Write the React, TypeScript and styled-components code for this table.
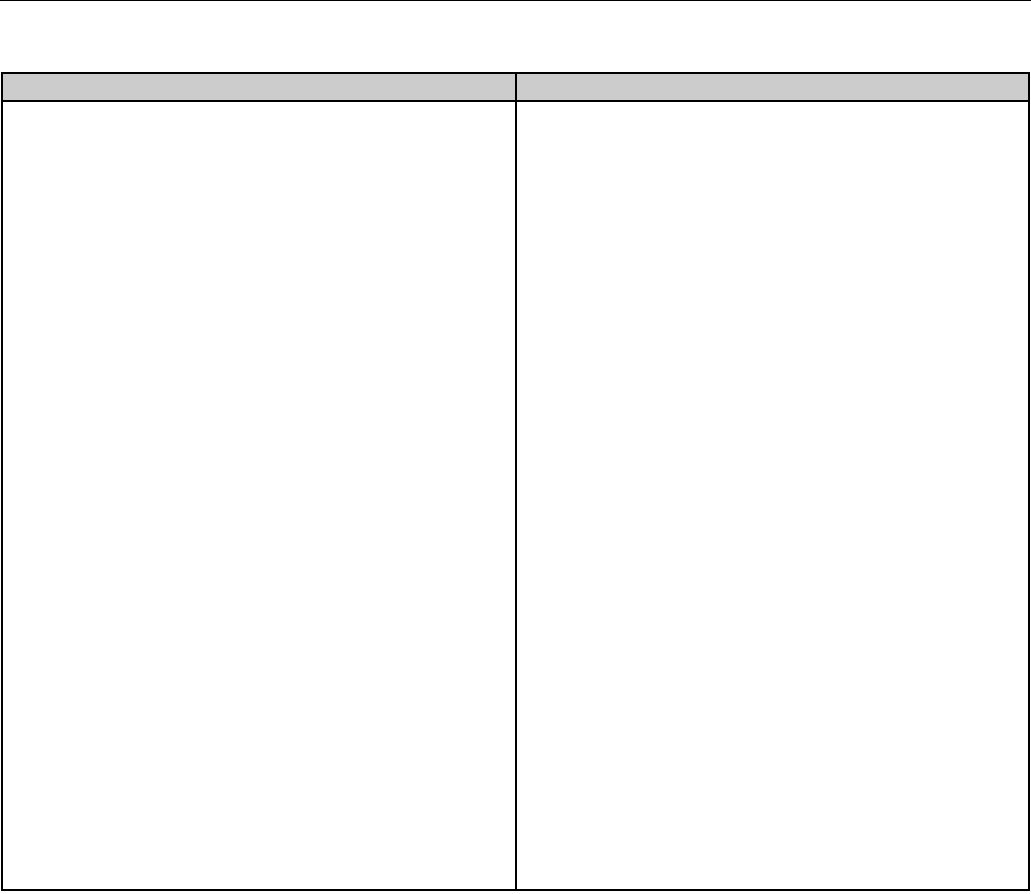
import React from 'react';
import styled, { createGlobalStyle } from 'styled-components';

const GlobalStyle = createGlobalStyle`
  html, body {
    margin: 0;
    padding: 0;
    background: #fff;
    font-family: "Liberation Sans", Arial, sans-serif;
  }
`;

const TopRule = styled.div`
  height: 1px;
  background: #000;
`;

const Table = styled.div`
  margin: 71px 1px 0 1px;
  border: 2px solid #000;
  display: grid;
  grid-template-columns: 514px 1fr;
  grid-template-rows: 28px 787px;
`;

interface CellProps {
  $head?: boolean;
  $first?: boolean;
}

const Cell = styled.div<CellProps>`
  background: ${(p) => (p.$head ? '#cccccc' : '#fff')};
  border-right: ${(p) => (p.$first ? '2px solid #000' : 'none')};
  border-bottom: ${(p) => (p.$head ? '2px solid #000' : 'none')};
  font-size: 14px;
`;

const App: React.FC = () => {
  return (
    <>
      <GlobalStyle />
      <TopRule />
      <Table>
        <Cell $head $first />
        <Cell $head />
        <Cell $first />
        <Cell />
      </Table>
    </>
  );
};

export default App;
